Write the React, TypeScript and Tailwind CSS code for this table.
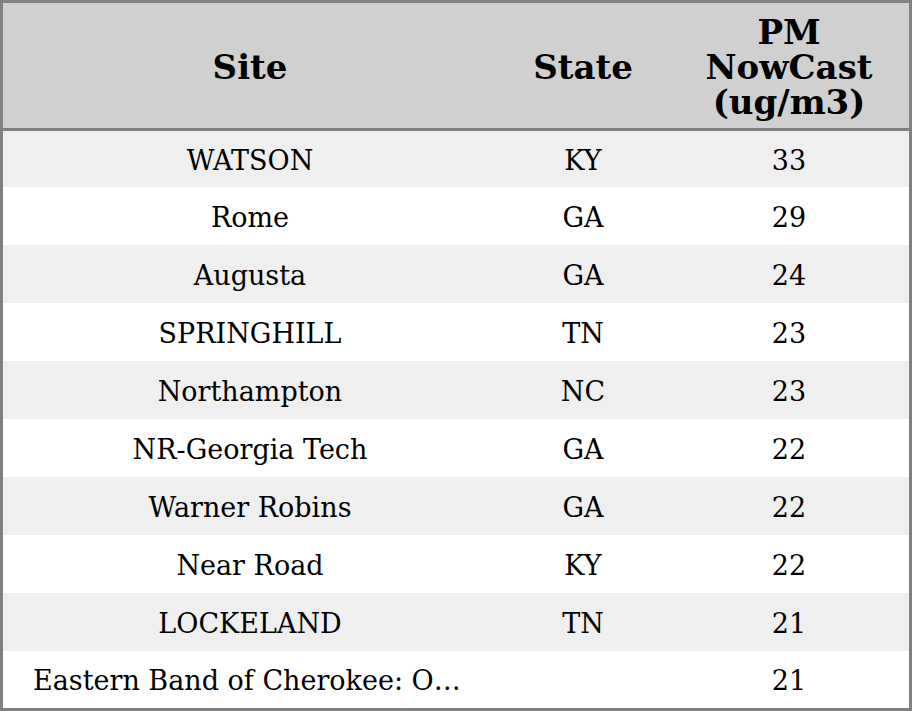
const rows = [
  { site: 'WATSON', state: 'KY', pm: 33 },
  { site: 'Rome', state: 'GA', pm: 29 },
  { site: 'Augusta', state: 'GA', pm: 24 },
  { site: 'SPRINGHILL', state: 'TN', pm: 23 },
  { site: 'Northampton', state: 'NC', pm: 23 },
  { site: 'NR-Georgia Tech', state: 'GA', pm: 22 },
  { site: 'Warner Robins', state: 'GA', pm: 22 },
  { site: 'Near Road', state: 'KY', pm: 22 },
  { site: 'LOCKELAND', state: 'TN', pm: 21 },
  { site: 'Eastern Band of Cherokee: Oconaluftee Job Corps', state: '', pm: 21 },
]

export default function App() {
  return (
    <div className="h-[711px] w-[912px] overflow-hidden bg-white font-['DejaVu_Serif',serif] text-black">
      <div className="flex h-full flex-col border-[3px] border-[#808080]">
        <div className="grid h-[128px] shrink-0 grid-cols-[494px_172px_1fr] items-center border-b-[3px] border-[#808080] bg-[#d0d0d0] pt-1 text-center text-[34px] font-bold leading-[35px]">
          <div>Site</div>
          <div>State</div>
          <div>
            PM
            <br />
            NowCast
            <br />
            (ug/m3)
          </div>
        </div>
        {rows.map((r, i) => (
          <div
            key={i}
            className={
              'grid shrink-0 grid-cols-[494px_172px_1fr] items-center pt-1 text-center text-[27px] ' +
              (i % 2 === 0 ? 'bg-[#efefef] ' : 'bg-white ') +
              (i === 0 ? 'h-[56px]' : i === rows.length - 1 ? 'h-[57px]' : 'h-[58px]')
            }
          >
            <div className="truncate px-[30px]">{r.site}</div>
            <div>{r.state}</div>
            <div>{r.pm}</div>
          </div>
        ))}
      </div>
    </div>
  )
}
